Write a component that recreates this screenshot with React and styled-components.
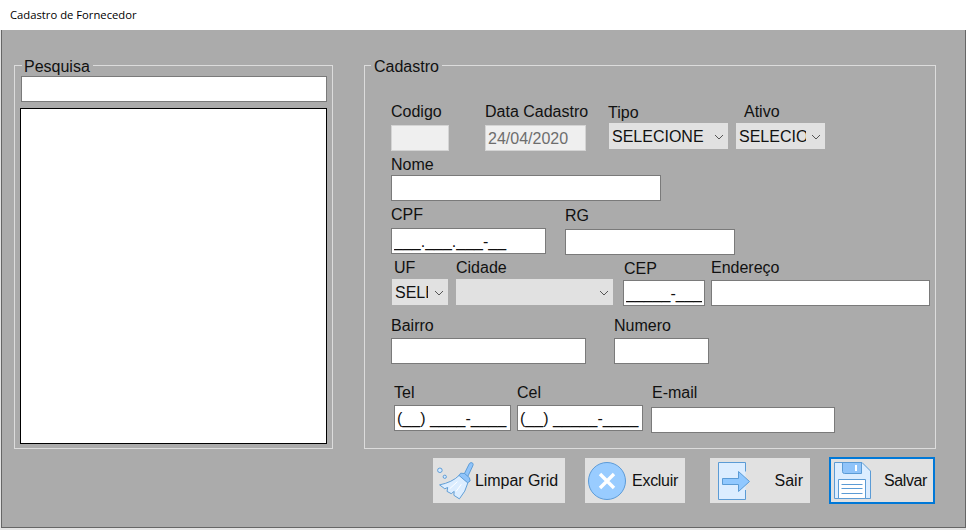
import React from "react";
import styled, { createGlobalStyle } from "styled-components";

const GlobalStyle = createGlobalStyle`
  html, body {
    margin: 0;
    padding: 0;
    background: #e4e4e4;
  }
  * {
    box-sizing: border-box;
  }
`;

const Win = styled.div`
  width: 966px;
  height: 530px;
  overflow: hidden;
  font-family: "Liberation Sans", Arial, sans-serif;
  font-size: 16px;
  color: #111;
`;
const TitleBar = styled.header`
  height: 30px;
  background: #fff;
  padding: 0 0 2px 10px;
  display: flex;
  align-items: center;
  font-family: "Open Sans", sans-serif;
  font-size: 11.25px;
  color: #000;
`;
const Panel = styled.main`
  height: 498px;
  margin-left: 1px;
  background: #ababab;
  border: 1px solid #666;
  border-top: none;
  padding: 27px 0 0 12px;
`;
const Columns = styled.div`
  display: flex;
  gap: 31px;
`;
const Group = styled.fieldset`
  width: ${p => p.$width}px;
  height: 392px;
  margin: 0;
  padding: 0 6px;
  border: 1px solid #dcdcdc;
  min-inline-size: 0;
`;
const Legend = styled.legend`
  margin-left: ${p => p.$left || 0}px;
  padding: 0 3px 0 ${p => p.$pad ?? 3}px;
  height: 17px;
  line-height: 20px;
  font-size: 16px;
`;
const Input = styled.input`
  display: block;
  width: ${p => p.$width}px;
  height: 26px;
  margin: 0;
  padding: 2px 2px 0;
  border: 1px solid #7a7a7a;
  border-radius: 0;
  outline: none;
  background: #fff;
  color: #111;
  font-family: "Liberation Sans", Arial, sans-serif;
  font-size: 16px;
  line-height: 18px;
  &:disabled {
    border-color: #d4d4d4;
    background: #efefef;
    color: #6d6d6d;
  }
`;
const SearchInput = styled(Input)`
  margin-top: 2px;
`;
const ResultList = styled.div`
  width: 307px;
  height: 336px;
  margin: 6px 0 0 -1px;
  background: #fff;
  border: 1px solid #000;
`;
const FormArea = styled.div`
  padding: 28px 0 0 20px;
`;
const Row = styled.div`
  display: flex;
  align-items: flex-start;
  margin-top: ${p => p.$top || 0}px;
`;
const Field = styled.div`
  display: flex;
  flex-direction: column;
  align-items: flex-start;
  width: ${p => (p.$width ? `${p.$width}px` : "auto")};
  margin-left: ${p => p.$left || 0}px;
  margin-top: ${p => p.$top || 0}px;
`;
const Label = styled.label`
  display: block;
  height: 18px;
  line-height: 20px;
  white-space: nowrap;
  margin-left: ${p => p.$indent || 0}px;
  margin-bottom: ${p => p.$gap}px;
`;
const SelectBox = styled.div`
  position: relative;
  display: flex;
  align-items: center;
  width: ${p => p.$width}px;
  height: 26px;
  margin-left: ${p => p.$indent || 0}px;
  padding-left: 3px;
  background: #e1e1e1;
`;
const SelectValue = styled.span`
  display: block;
  width: ${p => p.$clip}px;
  margin-top: 2px;
  overflow: hidden;
  white-space: nowrap;
  line-height: 18px;
`;
const Chevron = styled.svg`
  position: absolute;
  right: 4px;
  top: 11px;
  width: 10px;
  height: 6px;
`;
const Actions = styled.div`
  display: flex;
  align-items: center;
  height: 47px;
  margin-top: 8px;
  padding-left: 419px;
`;
const Action = styled.button`
  display: flex;
  align-items: center;
  justify-content: space-between;
  width: ${p => p.$width}px;
  height: 45px;
  margin: 0 0 0 ${p => p.$left || 0}px;
  padding: 0 7px 0 ${p => p.$pad}px;
  background: #e1e1e1;
  border: none;
  color: #111;
  font-family: "Liberation Sans", Arial, sans-serif;
  font-size: 16px;
  white-space: nowrap;
  letter-spacing: ${p => p.$tight || 0}px;
`;
const DefaultAction = styled(Action)`
  height: 47px;
  border: 2px solid #0078d7;
  padding-right: 6px;
`;

const Select = ({ width, value, clip, indent }) => (
  <SelectBox $width={width} $indent={indent}>
    <SelectValue $clip={clip}>{value}</SelectValue>
    <Chevron viewBox="0 0 10 6">
      <path d="M1 1 L5 5 L9 1" fill="none" stroke="#555" strokeWidth="1" />
    </Chevron>
  </SelectBox>
);

const BroomIcon = () => (
  <svg width="40" height="40" viewBox="0 0 120 120">
    <circle cx="12" cy="27" r="7" fill="#d6e9ff" stroke="#5b9bd5" strokeWidth="3" />
    <circle cx="27" cy="47" r="5" fill="#d6e9ff" stroke="#5b9bd5" strokeWidth="3" />
    <path d="M103 6 Q108 1 113 5 Q116 9 113 14 L97 48 L86 40 Z" fill="#90c4fa" stroke="#5b9bd5" strokeWidth="3" />
    <path d="M76 36 L88 37 L103 50 L105 60 L97 66 L70 44 Z" fill="#90c4fa" stroke="#5b9bd5" strokeWidth="3" />
    <path d="M71 43 Q50 64 11 72 L27 84 L36 80 L34 92 L47 99 L56 92 L55 104 L72 115 Q92 92 98 66 Z" fill="#dcedff" stroke="#5b9bd5" strokeWidth="3" />
    <path d="M42 84 L66 62 M62 92 L78 70" stroke="#fff" strokeWidth="3" />
  </svg>
);

const CancelIcon = () => (
  <svg width="40" height="40" viewBox="0 0 40 40">
    <circle cx="20" cy="20" r="18.5" fill="#99ccff" stroke="#5c9bd8" strokeWidth="1" />
    <path d="M13 13 L27 27 M27 13 L13 27" stroke="#fff" strokeWidth="3.4" />
  </svg>
);

const ExitIcon = () => (
  <svg width="34" height="38" viewBox="0 0 34 38">
    <path d="M0.5 0.5 H27.5 V38 H0.5 Z" fill="#dcedff" stroke="none" />
    <path d="M27.5 9.5 V0.5 H0.5 V37.5 H27.5 V28" fill="none" stroke="#5b9bd5" strokeWidth="1" />
    <path d="M4.5 16.5 H20.5 V9.5 L31.5 19.5 L20.5 29.5 V22.5 H4.5 Z" fill="#90c8ff" stroke="#5b9bd5" strokeWidth="1" />
  </svg>
);

const FloppyIcon = () => (
  <svg width="37" height="37" viewBox="0 0 37 37">
    <path d="M0.5 0.5 H28 L36.5 9 V36.5 H0.5 Z" fill="#dcedff" stroke="#5b9bd5" strokeWidth="1" />
    <path d="M8.5 0.5 H27.5 V11.5 H10.5 Q8.5 11.5 8.5 9.5 Z" fill="#90c4fa" stroke="#5b9bd5" strokeWidth="1" />
    <rect x="21" y="3" width="2" height="6" fill="#fff" />
    <path d="M4.5 36.5 V17.5 H31.5 V36.5 Z" fill="#fff" stroke="#5b9bd5" strokeWidth="1" />
    <path d="M7.5 22.5 H28.5 M7.5 26.5 H28.5 M7.5 31.5 H28.5" stroke="#5b9bd5" strokeWidth="1" />
  </svg>
);

export default function App() {
  return (
    <Win>
      <GlobalStyle />
      <TitleBar>Cadastro de Fornecedor</TitleBar>
      <Panel>
        <Columns>
          <Group $width={319}>
            <Legend $left={1} $pad={2}>Pesquisa</Legend>
            <SearchInput $width={306} />
            <ResultList />
          </Group>
          <Group $width={572}>
            <Legend>Cadastro</Legend>
            <FormArea>
              <Row>
                <Field>
                  <Label $gap={5}>Codigo</Label>
                  <Input $width={58} disabled />
                </Field>
                <Field $left={36} $width={101}>
                  <Label $gap={5}>Data Cadastro</Label>
                  <Input $width={101} disabled defaultValue="24/04/2020" />
                </Field>
                <Field $left={22} $top={1}>
                  <Label $gap={2}>Tipo</Label>
                  <Select width={119} indent={1} value="SELECIONE" />
                </Field>
                <Field $left={8}>
                  <Label $gap={3} $indent={8}>Ativo</Label>
                  <Select width={89} value="SELECIONE" clip={67} />
                </Field>
              </Row>
              <Row $top={4}>
                <Field>
                  <Label $gap={2}>Nome</Label>
                  <Input $width={270} />
                </Field>
              </Row>
              <Row $top={4}>
                <Field>
                  <Label $gap={5}>CPF</Label>
                  <Input $width={155} readOnly defaultValue="___.___.___-__" />
                </Field>
                <Field $left={19} $top={1}>
                  <Label $gap={5}>RG</Label>
                  <Input $width={170} />
                </Field>
              </Row>
              <Row $top={3}>
                <Field $left={1}>
                  <Label $gap={3} $indent={2}>UF</Label>
                  <Select width={56} value="SELECIONE" clip={33} />
                </Field>
                <Field $left={8}>
                  <Label $gap={3}>Cidade</Label>
                  <Select width={157} value="" />
                </Field>
                <Field $left={10} $top={1}>
                  <Label $gap={3} $indent={1}>CEP</Label>
                  <Input $width={82} readOnly defaultValue="_____-___" />
                </Field>
                <Field $left={6}>
                  <Label $gap={4}>Endereço</Label>
                  <Input $width={219} />
                </Field>
              </Row>
              <Row $top={10}>
                <Field>
                  <Label $gap={4}>Bairro</Label>
                  <Input $width={195} />
                </Field>
                <Field $left={28}>
                  <Label $gap={4}>Numero</Label>
                  <Input $width={95} />
                </Field>
              </Row>
              <Row $top={19}>
                <Field $left={3}>
                  <Label $gap={4}>Tel</Label>
                  <Input $width={117} readOnly defaultValue="(__) ____-____" />
                </Field>
                <Field $left={6}>
                  <Label $gap={4}>Cel</Label>
                  <Input $width={126} readOnly defaultValue="(__) _____-____" />
                </Field>
                <Field $left={8}>
                  <Label $gap={6} $indent={1}>E-mail</Label>
                  <Input $width={184} />
                </Field>
              </Row>
            </FormArea>
          </Group>
        </Columns>
        <Actions>
          <Action $width={132} $pad={3} $tight={-0.05}>
            <BroomIcon />
            Limpar Grid
          </Action>
          <Action $width={100} $pad={2} $left={20} $tight={-0.3}>
            <CancelIcon />
            Excluir
          </Action>
          <Action $width={100} $pad={8} $left={25}>
            <ExitIcon />
            Sair
          </Action>
          <DefaultAction $width={106} $pad={3} $left={19} $tight={-0.4}>
            <FloppyIcon />
            Salvar
          </DefaultAction>
        </Actions>
      </Panel>
    </Win>
  );
}
